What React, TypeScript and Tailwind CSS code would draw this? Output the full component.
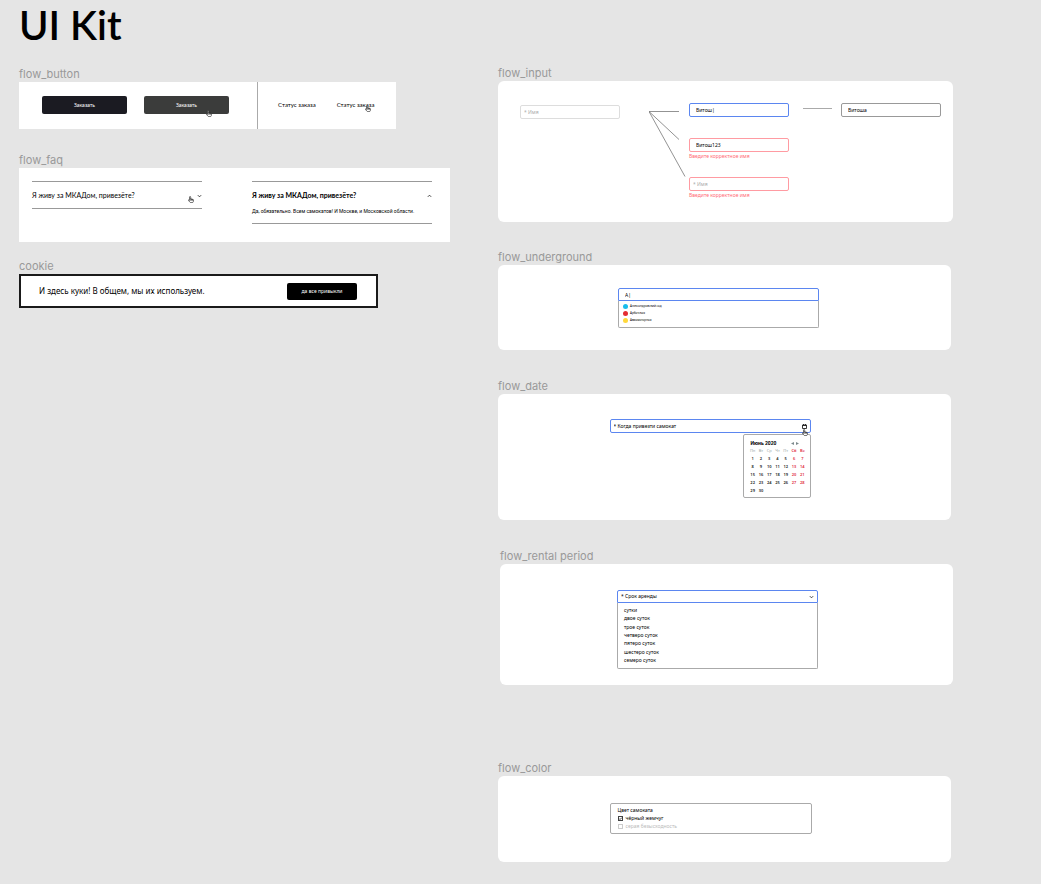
import type { ReactNode } from 'react';

function Section({ title, className = '', children }: { title: string; className?: string; children: ReactNode }) {
  return (
    <section className={className}>
      <h2 className="font-['Inter',sans-serif] text-[11px] leading-4 text-[#999999]">{title}</h2>
      {children}
    </section>
  );
}

function Hand({ className = '' }: { className?: string }) {
  return (
    <svg aria-hidden="true" viewBox="0 0 12 14" className={`pointer-events-none absolute h-[7px] w-[6px] ${className}`}>
      <path
        d="M3 8V2.2a1.2 1.2 0 0 1 2.4 0V6l4.2.8c1 .2 1.6.8 1.5 1.8l-.4 2.4c-.3 1.3-.8 2.2-2 2.2H5.6c-1 0-1.5-.5-2-1.2L.8 8.8c-.4-.8.7-1.6 1.4-1L3 8.6M5.4 6v2.5M7.4 6.5v2M9.3 7v1.7"
        fill="#fff"
        stroke="#222"
        strokeWidth="1.3"
        strokeLinecap="round"
        strokeLinejoin="round"
      />
    </svg>
  );
}

function Chevron({ up = false, className = '' }: { up?: boolean; className?: string }) {
  return (
    <svg aria-hidden="true" viewBox="0 0 6 4" className={`h-[4px] w-[5px] shrink-0 ${className}`}>
      <path d={up ? 'M1 3l2-2 2 2' : 'M1 1l2 2 2-2'} fill="none" stroke="#222" strokeWidth="1" />
    </svg>
  );
}

function Field({
  label,
  value,
  tone,
  error,
  className = '',
}: {
  label: string;
  value?: string;
  tone: string;
  error?: string;
  className?: string;
}) {
  return (
    <div className={className}>
      <input
        aria-label={label}
        placeholder="* Имя"
        defaultValue={value}
        className={`block h-[14px] w-full rounded-[2px] border bg-white text-[5px] leading-3 text-black outline-none placeholder:text-[#aaaaaa] ${value ? 'px-[6px]' : 'px-[3px]'} ${tone}`}
      />
      {error && <p className="text-[5px] leading-2 text-[#ff6b75]">{error}</p>}
    </div>
  );
}

const stations = [
  { name: 'Александровский сад', color: 'bg-[#19bdec]' },
  { name: 'Арбатская', color: 'bg-[#e42d32]' },
  { name: 'Авиамоторная', color: 'bg-[#ffd83b]' },
];
const periods = ['сутки', 'двое суток', 'трое суток', 'четверо суток', 'пятеро суток', 'шестеро суток', 'семеро суток'];
const weekdays = ['Пн', 'Вт', 'Ср', 'Чт', 'Пт', 'Сб', 'Вс'];
const weeks = [0, 1, 2, 3, 4].map((w) => [1, 2, 3, 4, 5, 6, 7].map((d) => w * 7 + d));

function Calendar() {
  return (
    <div className="ml-auto mt-px w-[68px] rounded-[2px] border border-[#aaaaaa] pb-[2px] pl-[5px] pr-[3px] pt-[4px]">
      <div className="flex h-2 items-center justify-between pl-[2px] pr-[8px]">
        <strong className="font-['Roboto',sans-serif] text-[5px] leading-2">Июнь 2020</strong>
        <div className="flex gap-[2px]">
          <button aria-label="Предыдущий месяц">
            <svg aria-hidden="true" viewBox="0 0 4 4" className="size-[3px]">
              <path d="M4 0v4L0 2z" fill="#7d8a8d" />
            </svg>
          </button>
          <button aria-label="Следующий месяц">
            <svg aria-hidden="true" viewBox="0 0 4 4" className="size-[3px]">
              <path d="M0 0v4l4-2z" fill="#7d8a8d" />
            </svg>
          </button>
        </div>
      </div>
      <table className="w-full table-fixed border-collapse text-center text-[4px] leading-2">
        <thead>
          <tr>
            {weekdays.map((d, i) => (
              <th key={d} className={i > 4 ? 'p-0 font-semibold text-[#e0283c]' : 'p-0 font-normal text-[#9aa5a5]'}>
                {d}
              </th>
            ))}
          </tr>
        </thead>
        <tbody>
          {weeks.map((week) => (
            <tr key={week[0]}>
              {week.map((d, i) => (
                <td key={d} className={i > 4 ? 'p-0 font-semibold text-[#e0283c]' : 'p-0 font-semibold text-[#222222]'}>
                  {d <= 30 ? d : ''}
                </td>
              ))}
            </tr>
          ))}
        </tbody>
      </table>
    </div>
  );
}

export default function App() {
  return (
    <main className="min-h-screen bg-[#e5e5e5] pb-[22px] pl-[19px] pr-[88px] font-['Noto_Sans',sans-serif] text-black">
      <div className="grid grid-cols-[431fr_455fr] gap-12">
        <div>
          <h1 className="pb-[16px] font-['Lato',sans-serif] text-[40px] font-semibold leading-[50px]">UI Kit</h1>

          <Section title="flow_button">
            <div className="flex h-[47px] w-[377px] max-w-full bg-white">
              <div className="flex w-[239px] gap-[17px] border-r border-[#aaaaaa] pl-[23px] pt-[14px]">
                <button className="h-[18px] w-[85px] rounded-[2px] bg-[#1b1b22] pt-px text-[5px] text-white">Заказать</button>
                <div className="relative h-[18px]">
                  <button className="block h-[18px] w-[85px] rounded-[2px] bg-[#3b3c3b] pt-px text-[5px] text-white">
                    Заказать
                  </button>
                  <Hand className="left-[62px] top-[14px]" />
                </div>
              </div>
              <div className="flex gap-[21px] pl-[20px] pt-[19px] font-['Lato',sans-serif] text-[6px] leading-2">
                <a href="#status" className="block">
                  Статус заказа
                </a>
                <a href="#status" className="relative block">
                  Статус заказа
                  <Hand className="right-[3px] top-[4px]" />
                </a>
              </div>
            </div>
          </Section>

          <Section title="flow_faq" className="mt-[23px]">
            <div className="flex h-[74px] items-start gap-[50px] bg-white px-[13px] pt-[13px] font-['Lato',sans-serif]">
              <div className="w-[170px] border-y border-[#999999]">
                <button className="relative flex h-[26px] w-full items-center justify-between pt-px text-left text-[7px]">
                  Я живу за МКАДом, привезёте?
                  <Chevron />
                  <Hand className="right-[8px] top-[14px]" />
                </button>
              </div>
              <div className="w-[180px] border-y border-[#999999]">
                <button className="flex h-[26px] w-full items-center justify-between pt-px text-left text-[7px] font-bold">
                  Я живу за МКАДом, привезёте?
                  <Chevron up />
                </button>
                <p className="h-[15px] whitespace-nowrap font-['Roboto',sans-serif] text-[5px] leading-[6px]">
                  Да, обязательно. Всем самокатов! И Москве, и Московской области.
                </p>
              </div>
            </div>
          </Section>

          <Section title="cookie" className="mt-4">
            <div className="flex h-[34px] w-[359px] max-w-full items-center justify-between border-2 border-[#1a1a1a] bg-white pl-[18px] pr-[19px]">
              <p className="text-[8px]">И здесь куки! В общем, мы их используем.</p>
              <button className="h-[17px] w-[70px] rounded-[2px] bg-black pt-px text-[5px] text-white">да все привыкли</button>
            </div>
          </Section>
        </div>

        <div className="pt-[65px]">
          <Section title="flow_input">
            <div className="flex h-[141px] items-start rounded-[6px] bg-white pl-[22px] pt-[22px]">
              <Field label="Имя" tone="border-[#dddddd]" className="w-[100px] pt-[2px]" />
              <svg aria-hidden="true" viewBox="0 0 37 70" className="ml-[29px] mt-[8px] h-[70px] w-[37px] shrink-0">
                <path d="M0 .5h30M0 .5l30 28M0 .5l36 65" fill="none" stroke="#777" strokeWidth=".8" />
              </svg>
              <div className="ml-[3px] w-[100px]">
                <Field label="Имя" value="Витош|" tone="border-[#5b86f0]" />
                <Field
                  label="Имя"
                  value="Витош123"
                  tone="border-[#ff9ba2]"
                  error="Введите корректное имя"
                  className="mt-[21px]"
                />
                <Field label="Имя" tone="border-[#ff9ba2]" error="Введите корректное имя" className="mt-[17px]" />
              </div>
              <div className="ml-[14px] mt-[5px] w-[29px] border-t border-[#aaaaaa]" />
              <Field label="Имя" value="Витоша" tone="border-[#999999]" className="ml-[9px] w-[100px]" />
            </div>
          </Section>

          <Section title="flow_underground" className="mt-[27px]">
            <div className="mr-[2px] flex h-[85px] items-start justify-center rounded-[6px] bg-white pr-[12px]">
              <div className="w-[201px] pt-[23px]">
                <input
                  aria-label="Станция метро"
                  defaultValue="А|"
                  className="block h-[13px] w-full rounded-t-[2px] border border-[#5b86f0] px-[6px] text-[5px] outline-none"
                />
                <ul className="rounded-b-[2px] border border-t-0 border-[#aaaaaa] px-[4px] pb-[3px] pt-[2px]">
                  {stations.map((s) => (
                    <li key={s.name} className="flex h-[7px] items-center gap-[2px] text-[3px] leading-[7px]">
                      <span className={`size-[5px] rounded-full ${s.color}`} />
                      {s.name}
                    </li>
                  ))}
                </ul>
              </div>
            </div>
          </Section>

          <Section title="flow_date" className="mt-7">
            <div className="mr-[2px] flex h-[126px] items-start justify-center rounded-[6px] bg-white pr-[29px]">
              <div className="w-[201px] pt-[25px]">
                <div className="relative">
                  <input
                    aria-label="Когда привезти самокат"
                    placeholder="* Когда привезти самокат"
                    className="block h-[14px] w-full rounded-[2px] border border-[#5b86f0] px-[3px] text-[5px] outline-none placeholder:text-black"
                  />
                  <svg aria-hidden="true" viewBox="0 0 10 10" className="absolute right-[4px] top-[5px] size-[5px]">
                    <path d="M1 2h8v7H1zM1 3h8M3 0v2M7 0v2" fill="none" stroke="#222" strokeWidth="1.8" />
                  </svg>
                  <Hand className="right-[3px] top-[10px]" />
                </div>
                <Calendar />
              </div>
            </div>
          </Section>

          <Section title="flow_rental period" className="ml-[2px] mt-7">
            <div className="flex h-[121px] items-start justify-center rounded-[6px] bg-white pr-[18px]">
              <div className="w-[201px] pt-[26px]">
                <button className="flex h-[13px] w-full items-center justify-between rounded-t-[2px] border border-[#5b86f0] px-[3px] text-[5px]">
                  * Срок аренды
                  <Chevron />
                </button>
                <ul className="flex h-[66px] flex-col justify-between rounded-b-[2px] border border-t-0 border-[#aaaaaa] px-[6px] pb-[4px] pt-[3px] text-[5px]">
                  {periods.map((p) => (
                    <li key={p} className="leading-2">
                      {p}
                    </li>
                  ))}
                </ul>
              </div>
            </div>
          </Section>

          <Section title="flow_color" className="mt-[75px]">
            <div className="mr-[2px] flex h-[86px] items-start justify-center rounded-[6px] bg-white pr-[28px] pt-[27px]">
              <fieldset className="w-[202px] rounded-[2px] border border-[#aaaaaa] px-[7px] pb-[3px] pt-[2px] text-[5px] leading-2">
                <legend className="float-left w-full">Цвет самоката</legend>
                <label className="clear-both flex h-2 items-center gap-[3px]">
                  <span className="relative size-[5px]">
                    <input type="checkbox" defaultChecked className="block size-[5px] appearance-none border border-[#444444]" />
                    <svg aria-hidden="true" viewBox="0 0 5 5" className="pointer-events-none absolute inset-0 size-[5px]">
                      <path d="M1 2.5l1 1 2-2" fill="none" stroke="#000" strokeWidth=".7" />
                    </svg>
                  </span>
                  чёрный жемчуг
                </label>
                <label className="flex h-2 items-center gap-[3px] text-[#bbbbbb]">
                  <input type="checkbox" className="block size-[5px] appearance-none border border-[#cccccc]" />
                  серая безысходность
                </label>
              </fieldset>
            </div>
          </Section>
        </div>
      </div>
    </main>
  );
}
